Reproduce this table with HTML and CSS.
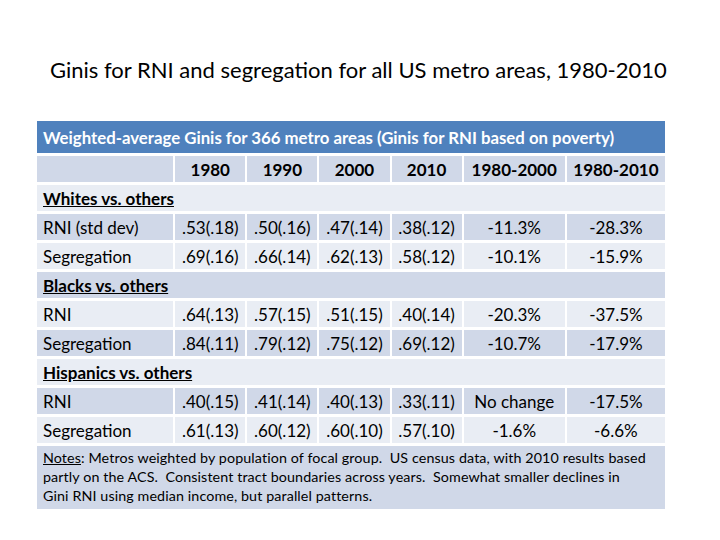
FILE: index.html
```html
<!DOCTYPE html>
<html>
<head>
<meta charset="utf-8">
<link rel="stylesheet" href="styles.css">
</head>
<body>
<div class="slide">
  <h1 class="title">Ginis for RNI and segregation for all US metro areas, 1980-2010</h1>
  <table class="gini">
    <colgroup>
      <col class="c-label"><col class="c-yr"><col class="c-yr"><col class="c-yr"><col class="c-yr"><col class="c-ch1"><col class="c-ch2">
    </colgroup>
    <thead>
      <tr class="caption-row"><th colspan="7">Weighted-average Ginis for 366 metro areas (Ginis for RNI based on poverty)</th></tr>
    </thead>
    <tbody>
      <tr class="dark head"><td></td><td>1980</td><td>1990</td><td>2000</td><td>2010</td><td>1980-2000</td><td>1980-2010</td></tr>
      <tr class="light section"><td colspan="7"><u>Whites vs. others</u></td></tr>
      <tr class="dark"><td>RNI (std dev)</td><td>.53(.18)</td><td>.50(.16)</td><td>.47(.14)</td><td>.38(.12)</td><td>-11.3%</td><td>-28.3%</td></tr>
      <tr class="light"><td>Segregation</td><td>.69(.16)</td><td>.66(.14)</td><td>.62(.13)</td><td>.58(.12)</td><td>-10.1%</td><td>-15.9%</td></tr>
      <tr class="dark section"><td colspan="7"><u>Blacks vs. others</u></td></tr>
      <tr class="light"><td>RNI</td><td>.64(.13)</td><td>.57(.15)</td><td>.51(.15)</td><td>.40(.14)</td><td>-20.3%</td><td>-37.5%</td></tr>
      <tr class="dark"><td>Segregation</td><td>.84(.11)</td><td>.79(.12)</td><td>.75(.12)</td><td>.69(.12)</td><td>-10.7%</td><td>-17.9%</td></tr>
      <tr class="light section"><td colspan="7"><u>Hispanics vs. others</u></td></tr>
      <tr class="dark"><td>RNI</td><td>.40(.15)</td><td>.41(.14)</td><td>.40(.13)</td><td>.33(.11)</td><td>No change</td><td>-17.5%</td></tr>
      <tr class="light"><td>Segregation</td><td>.61(.13)</td><td>.60(.12)</td><td>.60(.10)</td><td>.57(.10)</td><td>-1.6%</td><td>-6.6%</td></tr>
      <tr class="dark notes"><td colspan="7"><u>Notes</u>: Metros weighted by population of focal group.&nbsp; US census data, with 2010 results based<br>partly on the ACS.&nbsp; Consistent tract boundaries across years.&nbsp; Somewhat smaller declines in<br>Gini RNI using median income, but parallel patterns.</td></tr>
    </tbody>
  </table>
</div>
</body>
</html>
```

FILE: styles.css
```css
html, body {
  margin: 0;
  padding: 0;
  background: #ffffff;
}
body {
  font-family: "Lato", "Open Sans", "Liberation Sans", sans-serif;
  color: #000;
}
.slide {
  width: 720px;
  height: 540px;
  overflow: hidden;
}
.title {
  margin: 0;
  padding: 56px 0 0 50px;
  font-weight: 400;
  font-size: 22px;
  line-height: 28px;
  height: 65px;
  box-sizing: content-box;
  white-space: nowrap;
}
.gini {
  margin-left: 37px;
  width: 628px;
  table-layout: fixed;
  border-collapse: separate;
  border-spacing: 0;
  font-size: 17px;
}
.c-label { width: 136px; }
.c-yr { width: 72px; }
.c-ch1 { width: 103px; }
.c-ch2 { width: 100px; }
.caption-row th {
  background: #4f81bd;
  color: #fff;
  font-weight: 700;
  text-align: left;
  height: 32px;
  padding: 0 0 0 6px;
  font-size: 16.8px;
  white-space: nowrap;
}
.gini tbody td {
  border-top: 3px solid #fff;
  border-left: 2px solid #fff;
  height: 26px;
  padding: 0;
  text-align: center;
  white-space: nowrap;
}
.gini tbody td:first-child {
  border-left: 0;
  text-align: left;
  padding-left: 6px;
}
.gini .dark td { background: #d0d8e8; }
.gini .light td { background: #e9edf4; }
.gini .head td { font-weight: 700; }
.gini .section td { font-weight: 700; }
.gini tbody .notes td {
  white-space: normal;
  font-size: 14.3px;
  line-height: 19px;
  letter-spacing: 0.1px;
  height: 61px;
  padding: 2px 2px 0 6px;
  vertical-align: top;
  text-align: left;
}
```
